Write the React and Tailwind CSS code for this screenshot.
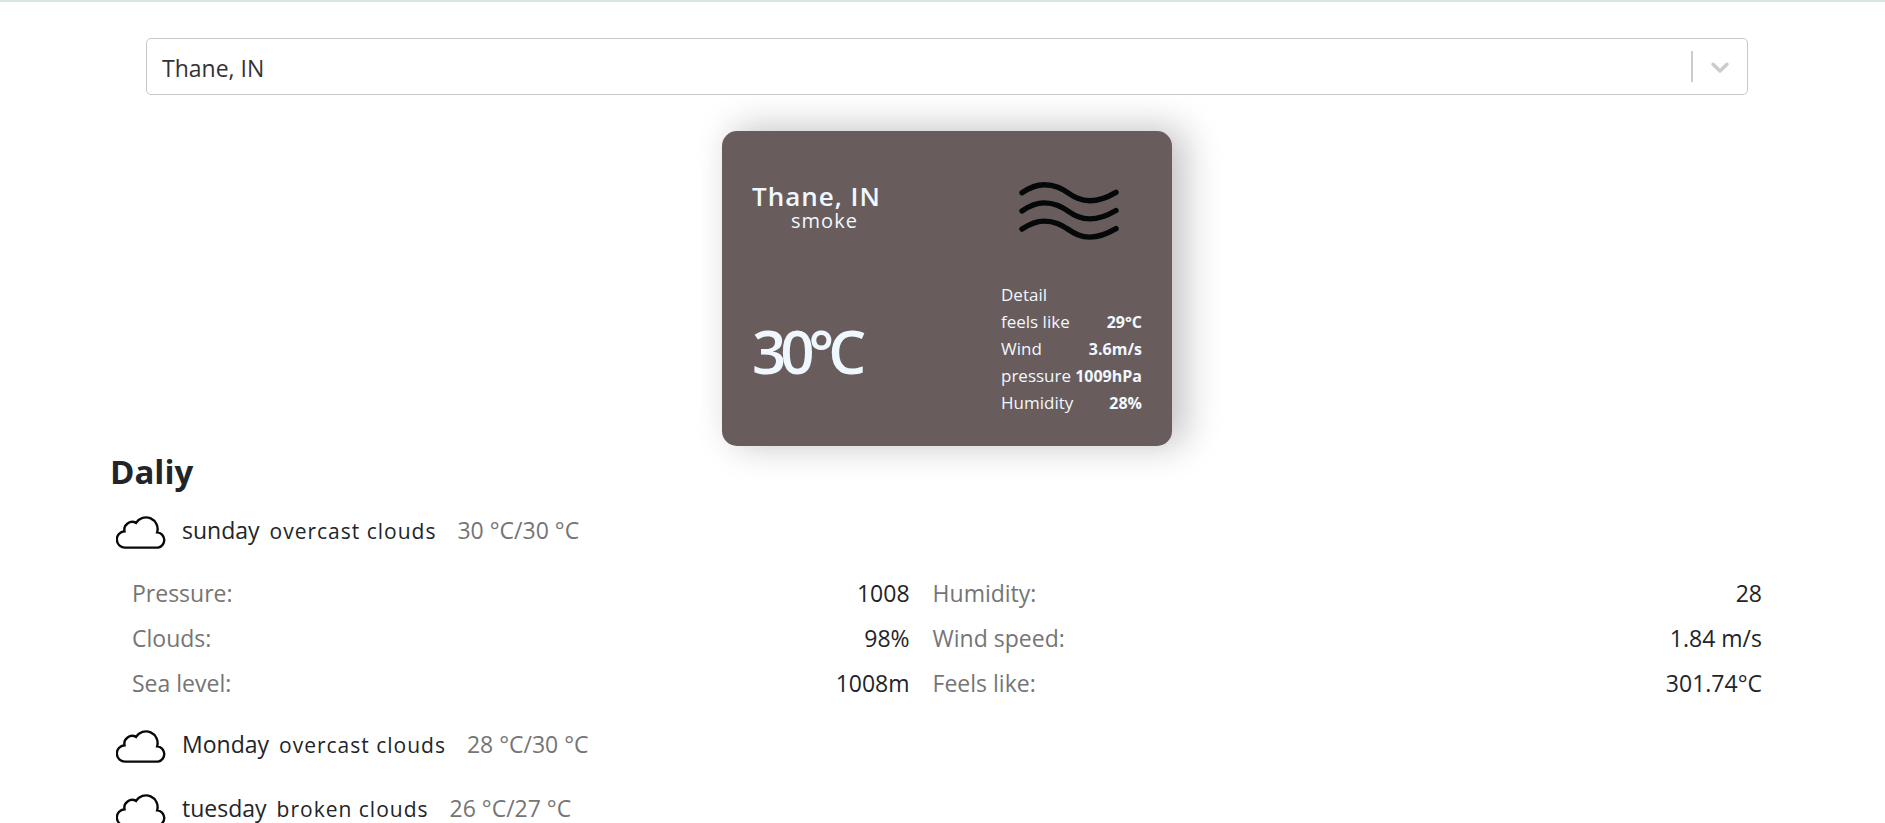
import React from "react";

const cardDetails = [
  ["feels like", "29°C"],
  ["Wind", "3.6m/s"],
  ["pressure", "1009hPa"],
  ["Humidity", "28%"],
];

const days = [
  {
    name: "sunday",
    description: "overcast clouds",
    range: "30 °C/30 °C",
    details: [
      ["Pressure:", "1008"],
      ["Humidity:", "28"],
      ["Clouds:", "98%"],
      ["Wind speed:", "1.84 m/s"],
      ["Sea level:", "1008m"],
      ["Feels like:", "301.74°C"],
    ],
  },
  { name: "Monday", description: "overcast clouds", range: "28 °C/30 °C" },
  { name: "tuesday", description: "broken clouds", range: "26 °C/27 °C" },
];

function WavesIcon() {
  return (
    <svg viewBox="0 0 100 60" className="h-[60px] w-[100px]" fill="none" stroke="#040808" strokeWidth="5.4" strokeLinecap="round" aria-hidden="true">
      <path d="M3 11.7C10 7 17 3.7 25 3.7C47 3.7 51 19.7 71 19.7C80 19.7 89 16 97 11.3" />
      <path d="M3 29.9C10 25.2 17 21.9 25 21.9C47 21.9 51 37.9 71 37.9C80 37.9 89 34.2 97 29.5" />
      <path d="M3 48.1C10 43.4 17 40.1 25 40.1C47 40.1 51 56.1 71 56.1C80 56.1 89 52.4 97 47.7" />
    </svg>
  );
}

function CloudIcon() {
  return (
    <svg viewBox="0 0 150 102" className="h-[35px] w-[51px] shrink-0" fill="none" stroke="#060a0a" strokeWidth="7" aria-hidden="true">
      <path d="M28 95.5A24 24 0 0 1 25 47.5A23 23 0 0 1 59 23A34.2 34.2 0 0 1 121 50.5A22.8 22.8 0 0 1 124 95.5Z" />
    </svg>
  );
}

function CitySelect() {
  return (
    <div className="relative mx-9">
      <select
        aria-label="City"
        defaultValue="Thane, IN"
        className="block h-[57px] w-full appearance-none rounded-[5px] border border-[#c8c8c8] bg-white pt-1 pr-16 pl-[15px] text-[23px] text-[#333333]"
      >
        <option>Thane, IN</option>
      </select>
      <div className="pointer-events-none absolute inset-y-0 right-0 flex items-center gap-[17px] pr-[18px]">
        <span className="h-[31px] w-[2px] bg-[#cccccc]" />
        <svg viewBox="0 0 20 20" className="size-5" fill="none" stroke="#cccccc" strokeWidth="3.4" strokeLinecap="round" strokeLinejoin="round" aria-hidden="true">
          <path d="M3 7.2L10 14L17 7.2" />
        </svg>
      </div>
    </div>
  );
}

function WeatherCard() {
  return (
    <section className="mx-auto flex h-[315px] w-[450px] flex-col justify-between rounded-[15px] bg-[#695c5c] px-[30px] pt-[50px] pb-[30px] text-[#f0f8ff] shadow-[12px_-2px_36px_0px_rgba(31,20,24,0.28)]">
      <div className="flex justify-between">
        <div>
          <h1 className="text-[26px] leading-[30px] font-semibold tracking-[1px]">Thane, IN</h1>
          <p className="pl-4 text-center text-[20px] leading-5 tracking-[1px]">smoke</p>
        </div>
        <div className="flex w-[147px] justify-center">
          <WavesIcon />
        </div>
      </div>
      <div className="flex items-center justify-between">
        <p className="pt-1 text-[60px] leading-[60px] font-semibold tracking-[-6px]">30°C</p>
        <dl className="w-[141px] text-[17px] leading-[27px]">
          <dt>Detail</dt>
          {cardDetails.map(([label, value]) => (
            <div key={label} className="flex h-[27px] items-baseline justify-between">
              <dt>{label}</dt>
              <dd className="text-[16px] font-bold">{value}</dd>
            </div>
          ))}
        </dl>
      </div>
    </section>
  );
}

function Day({ day }) {
  return (
    <li>
      <div className="flex h-16 items-center pl-[6px]">
        <div className="pt-1">
          <CloudIcon />
        </div>
        <div className="ml-[15px] flex items-baseline">
          <span className="text-[23px]">{day.name}</span>
          <span className="ml-[10px] text-[21px] tracking-[1px]">{day.description}</span>
          <span className="ml-[21px] text-[23px] text-[#757575]">{day.range}</span>
        </div>
      </div>
      {day.details && (
        <dl className="grid grid-cols-[15fr_16fr] gap-x-[23px] px-[22px] pt-[9px] pb-[6px] text-[23px] leading-[45px]">
          {day.details.map(([label, value]) => (
            <div key={label} className="flex justify-between">
              <dt className="text-[#757575]">{label}</dt>
              <dd>{value}</dd>
            </div>
          ))}
        </dl>
      )}
    </li>
  );
}

export default function App() {
  return (
    <main className="border-t-2 border-[#d9e4e4] bg-white pt-9 pr-[101px] pl-[110px] font-['Open_Sans','Noto_Sans',sans-serif] text-[#212529]">
      <CitySelect />
      <div className="mt-9">
        <WeatherCard />
      </div>
      <h2 className="mt-[2px] mb-[2px] text-[33px] leading-[48px] font-bold">Daliy</h2>
      <ul>
        {days.map((day) => (
          <Day key={day.name} day={day} />
        ))}
      </ul>
    </main>
  );
}
